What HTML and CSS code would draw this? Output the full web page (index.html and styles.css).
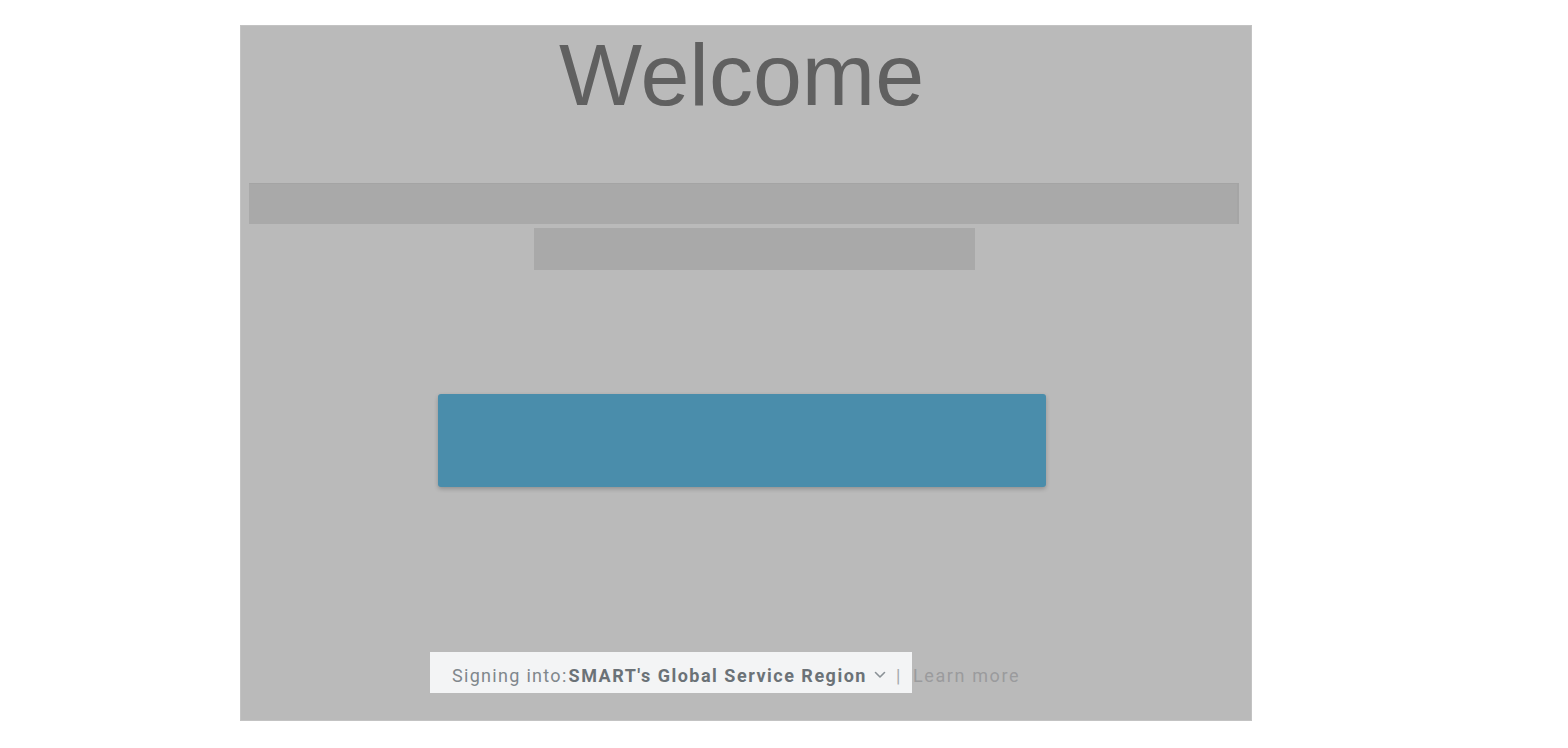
FILE: index.html
```html
<!DOCTYPE html>
<html lang="en">
<head>
<meta charset="utf-8">
<title>Welcome</title>
<link rel="stylesheet" href="styles.css">
</head>
<body>
<main class="panel">
  <h1 class="welcome">Welcome</h1>
  <div class="bar bar-wide"></div>
  <div class="bar bar-short"></div>
  <button class="primary" type="button" aria-label="Continue"></button>
  <div class="footer">
    <div class="region-box">
      <span class="label">Signing into:</span><span class="region">SMART's Global Service Region</span>
      <svg class="chev" width="12" height="8" viewBox="0 0 12 8" aria-hidden="true"><path d="M1.5 1.5 L6 6 L10.5 1.5" fill="none" stroke="#8a9196" stroke-width="1.6" stroke-linecap="round" stroke-linejoin="round"/></svg>
      <span class="pipe">|</span>
    </div>
    <a class="learn" href="#">Learn more</a>
  </div>
</main>
</body>
</html>
```
FILE: styles.css
```css
html, body {
  margin: 0;
  padding: 0;
  background: #ffffff;
}

body {
  padding-top: 25px;
  font-family: "Liberation Sans", Arial, sans-serif;
}

.panel {
  box-sizing: border-box;
  width: 1012px;
  height: 696px;
  margin-left: 240px;
  background: #bababa;
  border: 1px solid #c3c3c3;
  display: flex;
  flex-direction: column;
  align-items: flex-start;
}

.welcome {
  align-self: stretch;
  margin: 5px 0 0 0;
  padding-right: 9px;
  font-family: "Liberation Sans", Arial, sans-serif;
  font-weight: 400;
  font-size: 88px;
  line-height: 87px;
  color: #606060;
  text-align: center;
}

.bar {
  background: #a9a9a9;
}

.bar-wide {
  margin: 65px 0 0 8px;
  width: 990px;
  height: 41px;
  box-shadow: inset 0 1px 0 #a4a4a4, inset -2px 0 0 #a5a5a5;
}

.bar-short {
  margin: 4px 0 0 293px;
  width: 441px;
  height: 42px;
}

.primary {
  margin: 124px 0 0 197px;
  width: 608px;
  height: 93px;
  border: 0;
  padding: 0;
  border-radius: 3px;
  background: #4a8dab;
  box-shadow: 0 2px 4px rgba(0, 0, 0, 0.22);
}

.footer {
  margin: 165px 0 0 189px;
  display: flex;
  align-items: center;
  font-family: Roboto, "Liberation Sans", sans-serif;
  font-size: 18px;
}

.region-box {
  box-sizing: border-box;
  height: 41px;
  width: 482px;
  padding: 5px 0 0 22px;
  background: #f3f4f5;
  display: flex;
  align-items: center;
  white-space: nowrap;
}

.label {
  color: #80878c;
  letter-spacing: 1.3px;
}

.region {
  margin-left: 1px;
  color: #6b7277;
  font-weight: 700;
  letter-spacing: 1.5px;
}

.chev {
  margin-left: 7px;
  margin-top: 0;
}

.pipe {
  margin-left: 10px;
  color: #a3a8ab;
}

.learn {
  margin-left: 1px;
  padding-top: 5px;
  color: #9a9b9d;
  text-decoration: none;
  letter-spacing: 1.6px;
}
```
